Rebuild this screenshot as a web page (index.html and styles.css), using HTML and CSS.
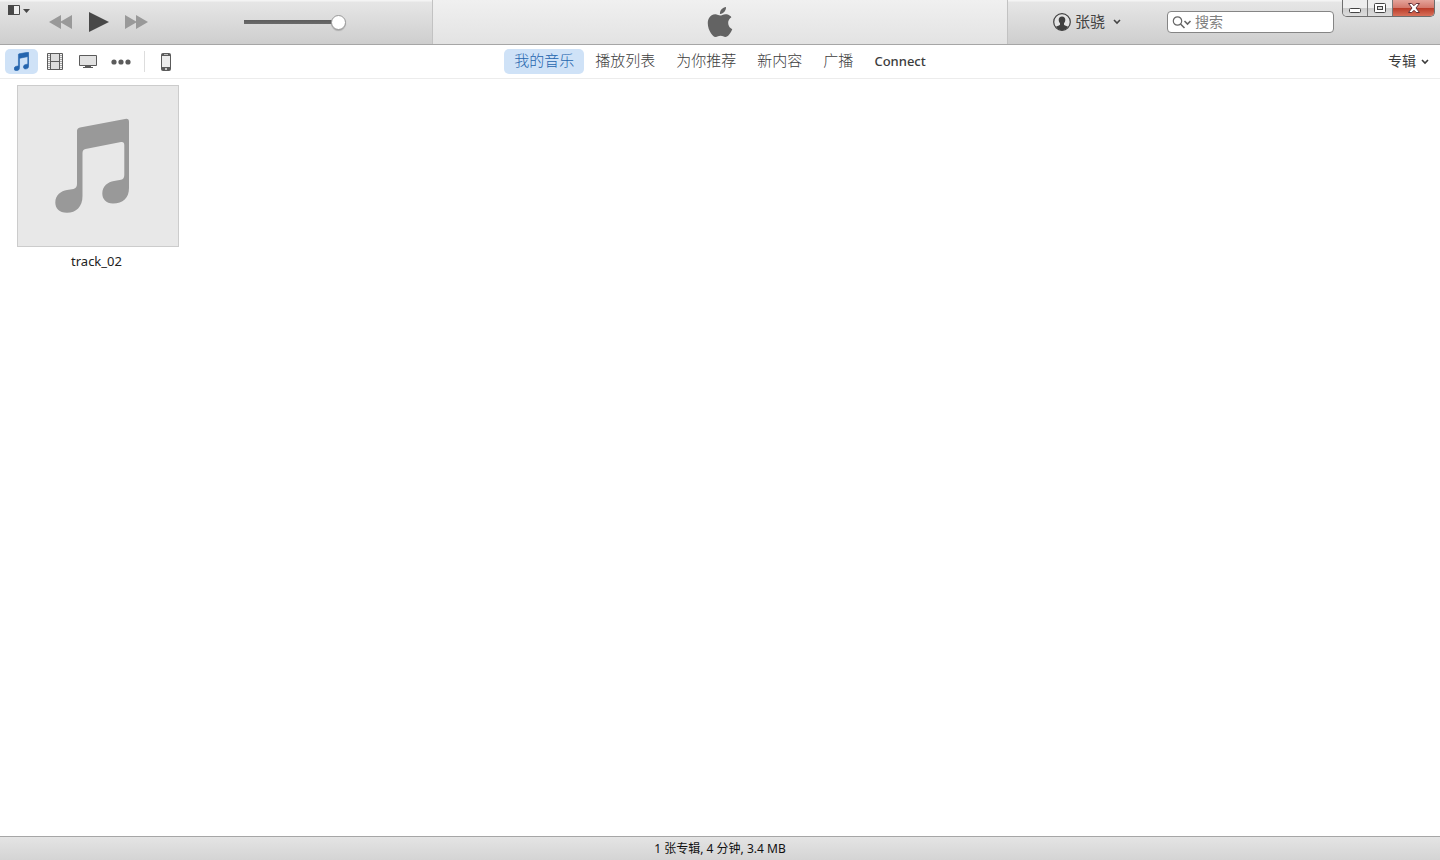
FILE: index.html
```html
<!DOCTYPE html>
<html lang="zh-CN">
<head>
<meta charset="utf-8">
<title>iTunes</title>
<link rel="stylesheet" href="styles.css">
</head>
<body>
<svg class="defs" aria-hidden="true">
  <symbol id="note" viewBox="37 32 75 96">
    <path d="M59 45q0-3 3-3.600L107 33q4-1 4 3V102C111 112 105 117.500 95 117.500C88 117.500 84.300 113 84.300 107.500C84.300 100 90 96 96 95L103 93.800Q106.300 93 106.300 89V59Q106.300 55.500 103 56L67.500 63Q64.500 63.600 64.500 67V110C64.500 121 58 126.700 49 126.700C41 126.700 37.300 122 37.300 116.500C37.300 109 43 105 49 104L55.500 103Q59 102 59 98Z"/>
  </symbol>
  <symbol id="chevron" viewBox="0 0 8 6">
    <path d="M1 1l3 3 3-3" fill="none" stroke="currentColor" stroke-width="1.600"/>
  </symbol>
</svg>
<div class="app">
  <header class="toolbar">
    <div class="player">
      <button class="app-menu" aria-label="菜单">
        <svg width="23" height="11" viewBox="0 0 23 11"><path d="M.5.500h11v9H.5z" fill="#eee" stroke="#484848"/><path d="M0 0h6v10H0zM15 4h7l-3.500 4z" fill="#484848"/></svg>
      </button>
      <div class="transport">
        <button aria-label="上一首"><svg width="24" height="16" viewBox="0 0 24 16"><path d="M12 1v14L0 8zM23 1v14L11 8z" fill="#999"/></svg></button>
        <button aria-label="播放"><svg width="20" height="20" viewBox="0 0 20 20"><path d="M0 0l20 10L0 20z" fill="#484848"/></svg></button>
        <button aria-label="下一首"><svg width="24" height="16" viewBox="0 0 24 16"><path d="M0 1v14l12-7zM11 1v14l12-7z" fill="#999"/></svg></button>
      </div>
      <input class="volume" type="range" min="0" max="100" value="100" aria-label="音量">
    </div>
    <div class="display">
      <svg width="30" height="30" viewBox="0 0 24 24" fill="#636363"><path d="M12.152 6.896c-.948 0-2.415-1.078-3.960-1.040-2.040.027-3.910 1.183-4.961 3.014-2.117 3.675-.546 9.103 1.519 12.090 1.013 1.454 2.208 3.090 3.792 3.039 1.520-.065 2.090-.987 3.935-.987 1.831 0 2.350.987 3.960.948 1.637-.026 2.676-1.480 3.676-2.948 1.156-1.688 1.636-3.325 1.662-3.415-.039-.013-3.182-1.221-3.220-4.857-.026-3.040 2.480-4.494 2.597-4.559-1.429-2.090-3.623-2.324-4.390-2.376-2-.156-3.675 1.090-4.610 1.090zM15.530 3.830c.843-1.012 1.400-2.427 1.245-3.830-1.207.052-2.662.805-3.532 1.818-.780.896-1.454 2.338-1.273 3.714 1.338.104 2.715-.688 3.559-1.701"/></svg>
    </div>
    <div class="session">
      <button class="account">
        <svg width="18" height="18" viewBox="0 0 18 18"><circle cx="9" cy="9" r="8.300" fill="#e4e4e4" stroke="#404040" stroke-width="1.200"/><path d="M9 3.400c2.200 0 3.300 1.400 3.300 3.400 0 1.600-.5 2.600-1.300 3.400v1.600c.3.800 2.900 1 4.100 2C13.600 16 11.500 17.200 9 17.200S4.400 16 2.900 13.800c1.200-1 3.800-1.200 4.100-2v-1.600C6.200 9.400 5.700 8.400 5.700 6.800c0-2 1.100-3.400 3.300-3.400z" fill="#404040"/></svg>
        <span>张骁</span>
        <svg class="chevron" width="8" height="6"><use href="#chevron"/></svg>
      </button>
      <label class="search">
        <svg width="20" height="13" viewBox="0 0 20 13" fill="none" stroke="#666"><circle cx="5.500" cy="5" r="4.200" stroke-width="1.200"/><path d="M8.500 8l4 4M12.500 5l3 3 3-3" stroke-width="1.600"/></svg>
        <input type="search" placeholder="搜索" aria-label="搜索">
      </label>
    </div>
    <div class="window-controls">
      <button aria-label="最小化"><svg width="12" height="5" viewBox="0 0 12 5"><rect x=".5" y=".5" width="11" height="4" rx="1" fill="#fff" stroke="#444"/></svg></button>
      <button aria-label="最大化"><svg width="12" height="10" viewBox="0 0 12 10"><rect x=".5" y=".5" width="11" height="9" rx="1" fill="#fff" stroke="#444"/><rect x="3.500" y="3.500" width="5" height="3" fill="#ddd" stroke="#444"/></svg></button>
      <button class="close" aria-label="关闭"><svg width="12" height="10" viewBox="0 0 12 10"><path d="M.5.500h3.300L6 2.700 8.200.5h3.300L8 5l3.500 4.500H8.200L6 7.300 3.800 9.500H.5L4 5z" fill="#fff" stroke="#623038"/></svg></button>
    </div>
  </header>
  <nav class="navbar">
    <div class="media">
      <button class="selected" aria-label="音乐"><svg width="15" height="19" fill="#2565ae" stroke="#2565ae" stroke-width="3"><use href="#note"/></svg></button>
      <button aria-label="影片"><svg width="16" height="17" viewBox="0 0 16 17"><path d="M.5.500h15v16H.5z" fill="#f4f4f4" stroke="#5b5b5b"/><path d="M3.500 1v15M12.500 1v15M4 8.500h8" stroke="#5b5b5b"/><path d="M2 2v14M14 2v14" stroke="#5b5b5b" stroke-dasharray="1 1"/><path d="M4 1h8v7H4zM4 9h8v7H4z" fill="#ddd"/></svg></button>
      <button aria-label="电视节目"><svg width="18" height="13" viewBox="0 0 18 13"><path d="M.5.500h17v10H.5z" fill="#e2e2e2" stroke="#5b5b5b"/><path d="M6 11h6v1h2v1H4v-1h2z" fill="#5b5b5b"/></svg></button>
      <button aria-label="更多"><svg width="20" height="6" viewBox="0 0 20 6" fill="#5b5b5b"><circle cx="3" cy="3" r="2.600"/><circle cx="10" cy="3" r="2.600"/><circle cx="17" cy="3" r="2.600"/></svg></button>
      <span class="divider"></span>
      <button aria-label="设备"><svg width="10" height="18" viewBox="0 0 10 18"><rect width="10" height="18" rx="2" fill="#5b5b5b"/><path d="M1 3h8v11H1z" fill="#ececec"/><path d="M3 1.500h4" stroke="#bbb"/><circle cx="5" cy="16" r="1" fill="#ececec"/></svg></button>
    </div>
    <div class="tabs">
      <button class="selected">我的音乐</button>
      <button>播放列表</button>
      <button>为你推荐</button>
      <button>新内容</button>
      <button>广播</button>
      <button class="latin">Connect</button>
    </div>
    <button class="view">
      <span>专辑</span>
      <svg class="chevron" width="8" height="6"><use href="#chevron"/></svg>
    </button>
  </nav>
  <main class="library">
    <figure class="album">
      <div class="cover"><svg width="75" height="96" fill="#999"><use href="#note"/></svg></div>
      <figcaption>track_02</figcaption>
    </figure>
  </main>
  <footer class="status">1 张专辑, 4 分钟, 3.4 MB</footer>
</div>
</body>
</html>
```
FILE: styles.css
```css
* { box-sizing: border-box; }

body {
  margin: 0;
  background: #fff;
  color: #3c3c3c;
  font: 13px/18px "Noto Sans", "Noto Sans CJK SC", sans-serif;
}

button {
  margin: 0;
  padding: 0;
  border: 0;
  background: none;
  color: inherit;
  font: inherit;
}

svg { display: block; flex: none; }

.defs { position: absolute; width: 0; height: 0; }

.app {
  display: flex;
  flex-direction: column;
  min-height: 100vh;
}

/* Top toolbar */
.toolbar {
  position: relative;
  display: grid;
  grid-template-columns: 3fr 4fr 3fr;
  height: 45px;
  border-bottom: 1px solid #a6a6a6;
  background: linear-gradient(#f4f4f4 1px, #e6e6e6 2px, #cecece);
}

.player { display: flex; align-items: center; padding-left: 8px; }

.app-menu { align-self: flex-start; padding-top: 5px; }

.transport {
  display: flex;
  align-items: center;
  gap: 16px;
  margin-left: 18px;
}

.volume {
  appearance: none;
  width: 102px;
  height: 16px;
  margin: 0 0 0 95px;
  background: linear-gradient(#5e5e5e, #6b6b6b) left center / 90px 4px no-repeat;
}

.volume::-webkit-slider-thumb {
  appearance: none;
  width: 15px;
  height: 15px;
  border: 1px solid #999;
  border-radius: 50%;
  background: #fff;
  box-shadow: 0 1px 1px rgba(0, 0, 0, .2);
}

.display {
  display: flex;
  align-items: center;
  justify-content: center;
  border: solid #c2c2c2;
  border-width: 0 1px;
  background: linear-gradient(#f0f0f0, #e3e3e3);
}

.session {
  display: flex;
  align-items: center;
  justify-content: flex-end;
  gap: 46px;
  padding-right: 106px;
}

.account {
  display: flex;
  align-items: center;
  gap: 4px;
  color: #444;
  font-size: 15px;
}

.account span { padding-bottom: 2px; }

.account .chevron { margin-left: 4px; }

.search {
  display: flex;
  align-items: center;
  gap: 3px;
  width: 167px;
  height: 22px;
  padding: 0 4px;
  border: 1px solid #858585;
  border-radius: 4px;
  background: #fff;
}

.search input {
  flex: 1;
  min-width: 0;
  padding: 0 0 2px;
  border: 0;
  outline: 0;
  background: none;
  color: #333;
  font: 14px/18px "Noto Sans CJK SC", sans-serif;
}

.search input::placeholder { color: #808080; }

.window-controls {
  position: absolute;
  top: 0;
  right: 5px;
  display: flex;
  overflow: hidden;
  border: 1px solid #6e6e6e;
  border-top: 0;
  border-radius: 0 0 5px 5px;
}

.window-controls button {
  display: flex;
  align-items: center;
  justify-content: center;
  width: 25px;
  height: 16px;
  border-right: 1px solid #777;
  background: linear-gradient(#eee 50%, #ccc 50%, #ddd);
}

.window-controls button:first-child { padding-top: 4px; }

.window-controls .close {
  width: 41px;
  border-right: 0;
  background: linear-gradient(#e4a39a, #d3776b 50%, #b93a27 50%, #d8705a);
}

/* Navigation */
.navbar {
  display: grid;
  grid-template-columns: 1fr auto 1fr;
  align-items: center;
  height: 34px;
  border-bottom: 1px solid #ececec;
}

.media { display: flex; align-items: center; padding-left: 5px; }

.media button {
  display: flex;
  align-items: center;
  justify-content: center;
  width: 33px;
  height: 25px;
  border-radius: 5px;
}

.navbar .selected { background: #cfe2f7; color: #2565ae; }

.divider {
  width: 1px;
  height: 21px;
  margin: 0 4px 0 7px;
  background: #ddd;
}

.tabs { display: flex; gap: 1px; }

.tabs button {
  height: 25px;
  padding: 0 10px 4px;
  border-radius: 5px;
  font-size: 15px;
  font-weight: 300;
}

.tabs .latin {
  padding-bottom: 2px;
  font-size: 13px;
  font-weight: 500;
}

.view {
  display: flex;
  align-items: center;
  justify-self: end;
  gap: 5px;
  padding-right: 11px;
  font-size: 14px;
}

.view span { padding-bottom: 2px; }

/* Albums */
.library {
  display: flex;
  flex: 1;
  flex-wrap: wrap;
  align-content: flex-start;
  gap: 17px;
  padding: 6px 17px;
}

.album { width: 162px; margin: 0; text-align: center; }

.cover {
  display: flex;
  align-items: center;
  justify-content: center;
  aspect-ratio: 1;
  padding-right: 12px;
  border: 1px solid #ccc;
  background: #e8e8e8;
}

figcaption { padding: 5px 3px 0 0; color: #222; }

.status {
  padding: 3px 0;
  border-top: 1px solid #a6a6a6;
  background: linear-gradient(#e4e4e4, #d4d4d4);
  color: #111;
  font-size: 12px;
  line-height: 17px;
  text-align: center;
}
```
